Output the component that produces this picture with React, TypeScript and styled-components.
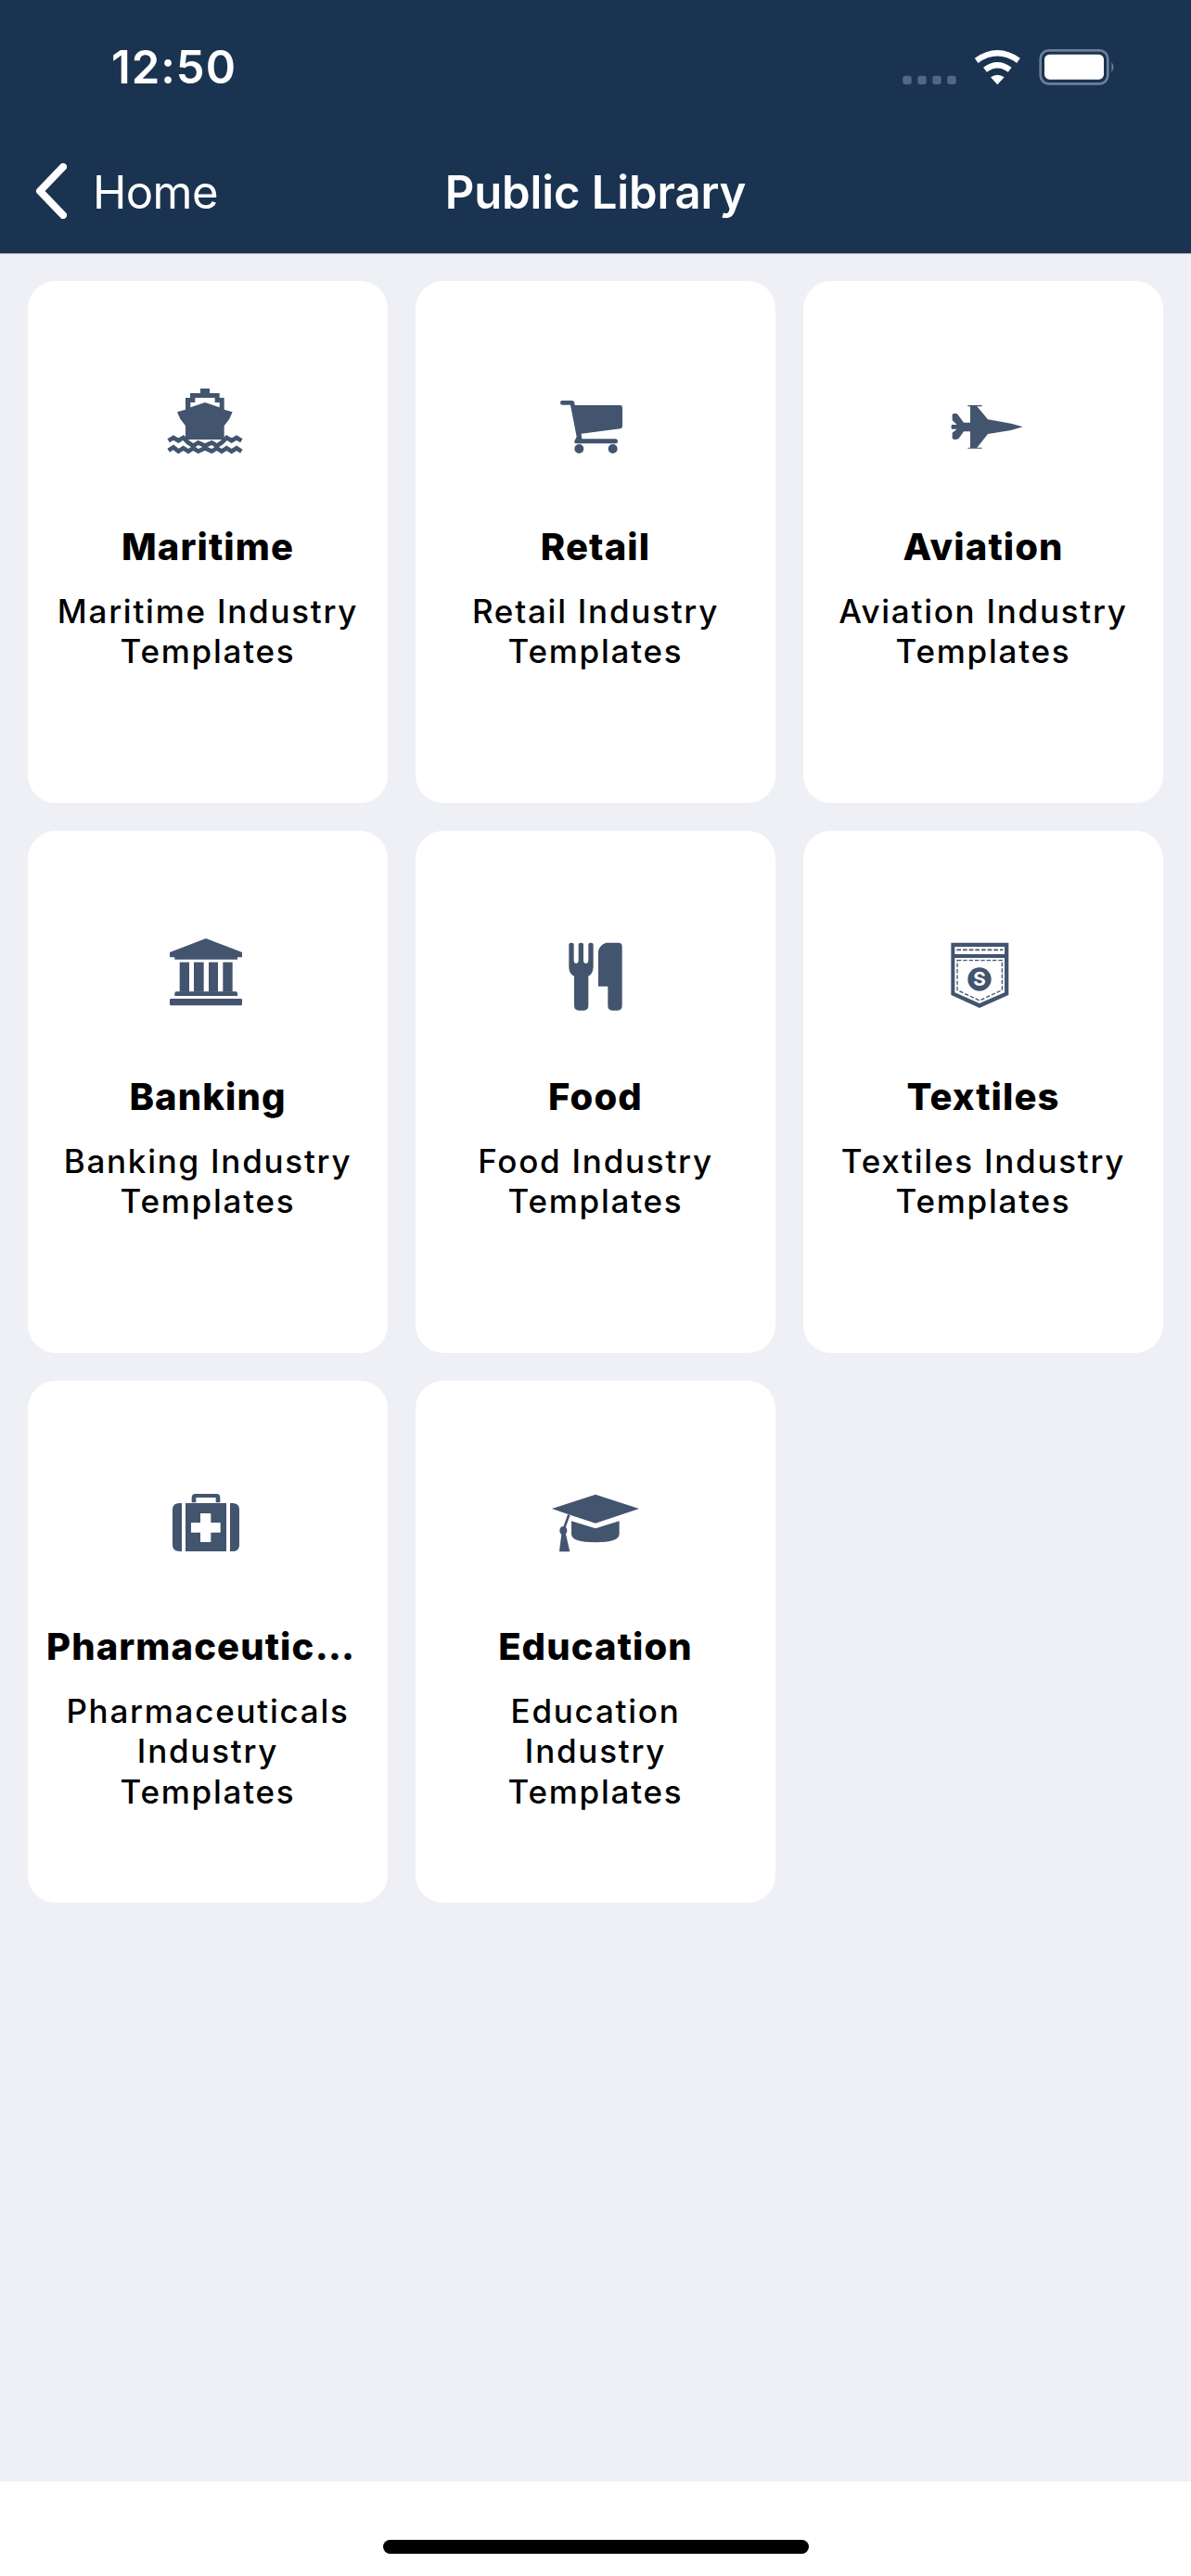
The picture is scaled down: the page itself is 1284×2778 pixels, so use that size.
import React from "react";
import styled, { createGlobalStyle } from "styled-components";

const Global = createGlobalStyle`
  html, body { margin: 0; padding: 0; background: #eef0f5; }
  * { box-sizing: border-box; }
`;

const Page = styled.div`
  width: 1284px;
  height: 2778px;
  display: flex;
  flex-direction: column;
  background: #eef0f5;
  font-family: Inter, "Liberation Sans", sans-serif;
`;

const Header = styled.header`
  height: 274px;
  background: #1a3350;
  border-bottom: 1px solid #a9b2c0;
  color: #fff;
  display: flex;
  flex-direction: column;
`;

const StatusBar = styled.div`
  height: 100px;
  padding: 30px 64px 0 120px;
  display: flex;
  justify-content: space-between;
  align-items: flex-start;
`;

const Time = styled.div`
  font-size: 49px;
  font-weight: 600;
  line-height: 70px;
  letter-spacing: 1px;
  padding-top: 8px;
`;

const NavBar = styled.nav`
  margin-top: 75px;
  height: 64px;
  padding: 0 36px;
  display: grid;
  grid-template-columns: 1fr auto 1fr;
  align-items: center;
`;

const Back = styled.div`
  display: flex;
  align-items: center;
  gap: 28px;
  font-size: 49px;
  font-weight: 400;
  letter-spacing: -0.6px;
`;

const BackIcon = styled.svg`
  flex: none;
  margin-top: -3px;
`;

const Title = styled.div`
  font-size: 49px;
  font-weight: 600;
  letter-spacing: -0.1px;
`;

const Content = styled.main`
  flex: 1;
  padding: 29px 30px 0;
  display: grid;
  grid-template-columns: repeat(3, 388px);
  grid-auto-rows: 563px;
  gap: 30px;
  align-content: start;
`;

const Card = styled.section`
  background: #fff;
  border-radius: 30px;
  padding: 97px 20px 0;
  display: flex;
  flex-direction: column;
  align-items: center;
  color: #000;
`;

const IconSvg = styled.svg`
  width: 140px;
  height: 100px;
  flex: none;
  display: block;
  fill: #43546f;
`;

const CardTitle = styled.h2`
  margin: 65px 0 0;
  width: 100%;
  font-size: 40px;
  line-height: 50px;
  font-weight: 800;
  text-align: center;
  white-space: nowrap;
  overflow: hidden;
  text-overflow: ellipsis;
  letter-spacing: 1.1px;
`;

const CardText = styled.p`
  margin: 23px 0 0;
  font-size: 35px;
  line-height: 43.4px;
  font-weight: 500;
  text-align: center;
  white-space: pre-line;
  letter-spacing: 1.75px;
`;

const Footer = styled.footer`
  height: 102px;
  background: #fff;
  padding-top: 63px;
  display: flex;
  justify-content: center;
  align-items: flex-start;
`;

const HomeBar = styled.div`
  width: 459px;
  height: 15px;
  border-radius: 8px;
  background: #000;
`;

const Chevron = () => (
  <BackIcon width="36" height="60" viewBox="0 0 36 60">
    <path d="M32 4 L7 30 L32 56" fill="none" stroke="#fff" strokeWidth="8" strokeLinecap="round" strokeLinejoin="round" />
  </BackIcon>
);

const StatusIcons = () => (
  <svg width="270" height="70" viewBox="0 0 810 210">
    <g fill="#56677f">
      <rect x="70" y="155" width="28" height="28" rx="8" />
      <rect x="118" y="155" width="28" height="28" rx="8" />
      <rect x="166" y="155" width="28" height="28" rx="8" />
      <rect x="214" y="155" width="28" height="28" rx="8" />
    </g>
    <g fill="none" stroke="#fff" strokeWidth="19">
      <path d="M308 106 Q376 58 444 106" />
      <path d="M336 136 Q376 106 416 136" />
    </g>
    <path d="M376 184 L354 160 Q376 144 398 160 Z" fill="#fff" />
    <rect x="515" y="73" width="218" height="108" rx="27" fill="none" stroke="#6d7f98" strokeWidth="8" />
    <rect x="528" y="86" width="192" height="81" rx="16" fill="#fff" />
    <path d="M745 110 Q757 127 745 145 Z" fill="#6d7f98" />
  </svg>
);

const Ship = () => (
  <IconSvg viewBox="42 0 420 300">
    <path fillRule="evenodd" d="M228 57 H258 V72 H290 V87 H305 V125 L332 133 L322 155 L305 178 V222 H180 V178 L163 155 L153 133 L180 125 V87 H195 V72 H228 Z M196 118 L243 102 L290 118 V102 H275 V87 H211 V102 H196 Z" />
    <g fill="none" stroke="#43546f" strokeWidth="14">
      <path d="M125 226 L141 216 L157 226 L173 216 L189 232 L205 242 L221 232 L243 242 L265 232 L281 242 L297 232 L313 216 L329 226 L345 216 L361 226" />
      <path d="M125 257 L141 247 L157 260 L173 250 L189 260 L205 250 L221 260 L243 250 L265 260 L281 250 L297 260 L313 250 L329 260 L345 250 L361 260" />
    </g>
  </IconSvg>
);

const Cart = () => (
  <IconSvg viewBox="6 0 420 300">
    <path d="M108 96 H140 Q146 96 148 102 L149 111 H296 Q303 111 303 118 V179 Q303 186 296 187 L170 203 L172 220 H280 Q288 220 288 228 Q288 235 280 235 H155 Q147 235 148 227 L155 213 L135 110 H108 Q102 110 102 103 Q102 96 108 96 Z" />
    <circle cx="163" cy="252" r="15" />
    <circle cx="272" cy="252" r="15" />
  </IconSvg>
);

const Jet = () => (
  <IconSvg viewBox="0 -30 420 300">
    <path d="M338 151 L300 162 L225 174 L190 218 H206 V221 H160 V218 H168 V166 H147 L130 190 Q115 195 110 188 V170 L125 158 L108 158 Q104 151 108 144 L125 144 L110 130 V110 Q120 105 127 110 L147 137 H168 V85 H160 V81 H206 V85 H190 L225 127 L300 140 Z" />
  </IconSvg>
);

const Bank = () => (
  <IconSvg viewBox="-18 -24 420 300">
    <path d="M186 33 L303 78 V94 H288 V101 H85 V94 H69 V78 Z" />
    <rect x="101" y="110" width="31" height="96" />
    <rect x="147" y="110" width="32" height="96" />
    <rect x="195" y="110" width="30" height="96" />
    <rect x="241" y="110" width="31" height="96" />
    <path d="M85 219 V211 Q85 205 91 205 H282 Q288 205 288 211 V219 Z" />
    <rect x="69" y="228" width="234" height="22" rx="4" />
  </IconSvg>
);

const Cutlery = () => (
  <IconSvg viewBox="-54 -24 420 300">
    <path d="M70 54 Q70 47 78 47 Q86 47 86 54 V103 Q86 114 93 114 Q101 114 101 103 V54 Q101 47 109 47 Q117 47 117 54 V103 Q117 114 125 114 Q133 114 133 103 V54 Q133 47 141 47 Q149 47 149 54 V125 Q148 148 133 155 V250 Q133 266 118 266 H102 Q87 266 87 250 V155 Q70 148 70 125 Z" />
    <path d="M165 75 Q168 55 190 47 H230 Q242 47 242 58 V250 Q242 266 228 266 H210 Q196 266 196 250 V188 H165 Z" />
  </IconSvg>
);

const PocketBadge = styled.text`
  font-family: Inter, "Liberation Sans", sans-serif;
  font-size: 62px;
  font-weight: 700;
  fill: #fff;
  text-anchor: middle;
`;

const Pocket = () => (
  <IconSvg viewBox="-30 -24 420 300">
    <path fillRule="evenodd" d="M76 47 H262 V216 L168 258 L76 216 Z M88 60 V84 H249 V60 Z M88 96 V208 L168 243 L249 208 V96 Z" />
    <path d="M94 70 H244" fill="none" stroke="#43546f" strokeWidth="5" strokeDasharray="14 6" />
    <path d="M96 104 H241 V200 L168 234 L96 200 Z" fill="none" stroke="#43546f" strokeWidth="4" strokeDasharray="13 6" />
    <circle cx="168" cy="165" r="38" />
    <PocketBadge x="168" y="187">S</PocketBadge>
  </IconSvg>
);

const Kit = () => (
  <IconSvg viewBox="-48 -15 420 300">
    <path d="M110 88 V72 Q110 60 122 60 H190 Q202 60 202 72 V88 H188 V72 H124 V88 Z" />
    <path fillRule="evenodd" d="M90 90 H222 V246 H90 Z M138 123 V153 H108 V185 H138 V216 H172 V185 H203 V153 H172 V123 Z" />
    <path d="M78 90 V246 H70 Q48 246 48 225 V111 Q48 90 70 90 Z" />
    <path d="M234 90 V246 H242 Q264 246 264 225 V111 Q264 90 242 90 Z" />
  </IconSvg>
);

const Cap = () => (
  <IconSvg viewBox="-24 -15 420 300">
    <path d="M186 62 L327 108 L186 155 L104 128 L45 108 Z" />
    <path d="M108 148 L186 172 L263 148 V190 Q263 217 186 217 Q108 217 108 190 Z" />
    <path d="M100 128 L84 172" fill="none" stroke="#43546f" strokeWidth="8" />
    <ellipse cx="82" cy="179" rx="12" ry="14" />
    <path d="M76 190 H90 L103 247 H69 Z" />
  </IconSvg>
);

const items = [
  { icon: <Ship />, title: "Maritime", text: "Maritime Industry\nTemplates" },
  { icon: <Cart />, title: "Retail", text: "Retail Industry\nTemplates" },
  { icon: <Jet />, title: "Aviation", text: "Aviation Industry\nTemplates" },
  { icon: <Bank />, title: "Banking", text: "Banking Industry\nTemplates" },
  { icon: <Cutlery />, title: "Food", text: "Food Industry\nTemplates" },
  { icon: <Pocket />, title: "Textiles", text: "Textiles Industry\nTemplates" },
  { icon: <Kit />, title: "Pharmaceuticals", text: "Pharmaceuticals\nIndustry\nTemplates" },
  { icon: <Cap />, title: "Education", text: "Education\nIndustry\nTemplates" },
];

export default function App() {
  return (
    <Page>
      <Global />
      <Header>
        <StatusBar>
          <Time>12:50</Time>
          <StatusIcons />
        </StatusBar>
        <NavBar>
          <Back>
            <Chevron />
            <span>Home</span>
          </Back>
          <Title>Public Library</Title>
          <span />
        </NavBar>
      </Header>
      <Content>
        {items.map((it) => (
          <Card key={it.title}>
            {it.icon}
            <CardTitle>{it.title}</CardTitle>
            <CardText>{it.text}</CardText>
          </Card>
        ))}
      </Content>
      <Footer>
        <HomeBar />
      </Footer>
    </Page>
  );
}
